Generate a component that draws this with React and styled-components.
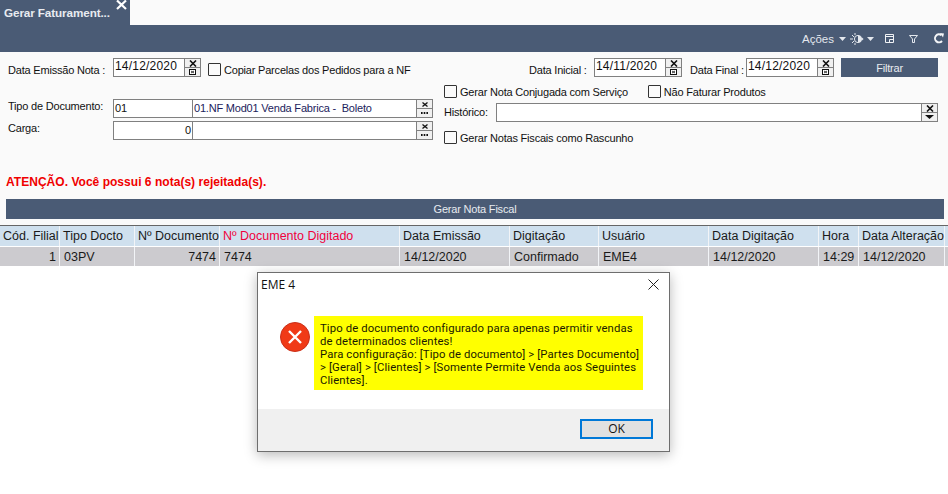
import React from 'react'
import styled, { createGlobalStyle } from 'styled-components'

const GlobalStyle = createGlobalStyle`
  html, body { margin: 0; padding: 0; background: #fff; }
  body { font-family: "Liberation Sans", Arial, sans-serif; font-size: 11px; color: #111; overflow: hidden; }
`

const Page = styled.div`
  position: relative;
  width: 948px;
  height: 494px;
  overflow: hidden;
  background: #fff;
`

const TabStrip = styled.div`
  height: 25px;
  background: #fafafa;
  display: flex;
`

const Tab = styled.div`
  width: 130px;
  background: #4a5b75;
  color: #e8ebf0;
  font-weight: 700;
  font-size: 11.7px;
  line-height: 26px;
  padding-left: 4px;
  box-sizing: border-box;
  display: flex;
  white-space: nowrap;
  letter-spacing: -0.1px;
`

const TabClose = styled.svg`
  width: 11px;
  height: 10px;
  flex: none;
  margin: 0 0 0 6px;
`

const Toolbar = styled.div`
  height: 27px;
  background: #4a5b75;
  color: #e4e8ee;
  display: flex;
  align-items: center;
  justify-content: flex-end;
  padding-right: 3px;
  box-sizing: border-box;
`

const ToolText = styled.span`
  font-size: 11.5px;
  margin-right: 5px;
`

const ToolIcon = styled.svg`
  display: block;
  flex: none;
  margin-left: ${p => p.$left || 0}px;
`

const Panel = styled.div`
  height: 173px;
  background: #fafafa;
  display: flex;
  flex-direction: column;
`

const Form = styled.div`
  height: 122px;
  padding: 6px 10px 0 8px;
  box-sizing: border-box;
`

const TopRow = styled.div`
  display: flex;
  align-items: flex-start;
  height: 27px;
`

const Label = styled.span`
  font-size: 11px;
  letter-spacing: -0.2px;
  color: #111;
  white-space: nowrap;
  width: ${p => (p.$width ? `${p.$width}px` : 'auto')};
  margin-left: ${p => p.$left || 0}px;
  padding-top: ${p => p.$top || 0}px;
  flex: none;
`

const DateField = styled.div`
  width: 88px;
  height: 19px;
  flex: none;
  display: flex;
  border: 1px solid #808080;
  box-sizing: border-box;
  background: #fff;
`

const DateValue = styled.div`
  flex: 1;
  font-size: 12px;
  line-height: 15px;
  padding-left: 1px;
  letter-spacing: 0.2px;
`

const SideButtons = styled.div`
  width: 16px;
  flex: none;
  display: flex;
  flex-direction: column;
  border-left: 1px solid #808080;
  box-sizing: border-box;
`

const SideButton = styled.div`
  flex: 1;
  display: flex;
  align-items: center;
  justify-content: center;
  background: #f0f0f0;
  & + & { border-top: 1px solid #808080; }
`

const Box = styled.span`
  width: 13px;
  height: 13px;
  flex: none;
  border: 1px solid #333;
  border-radius: 1px;
  box-sizing: border-box;
  background: #fafafa;
  display: inline-block;
`

const CheckLabel = styled.label`
  display: inline-flex;
  align-items: center;
  gap: 3px;
  font-size: 11px;
  letter-spacing: -0.2px;
  height: 13px;
  white-space: nowrap;
  margin-left: ${p => p.$left || 0}px;
  margin-top: ${p => p.$top || 0}px;
`

const Spacer = styled.div`
  flex: 1;
`

const DarkButton = styled.div`
  background: #4a5b75;
  color: #e8ebf0;
  font-size: 11px;
  letter-spacing: -0.2px;
  text-align: center;
`

const FilterButton = styled(DarkButton)`
  width: 97px;
  height: 19px;
  line-height: 20px;
  margin-left: 7px;
  flex: none;
`

const GenerateButton = styled(DarkButton)`
  height: 20px;
  line-height: 20px;
  margin: 9px 4px 0 6px;
`

const Columns = styled.div`
  display: grid;
  grid-template-columns: 425px 1fr;
  column-gap: 11px;
`

const LeftColumn = styled.div`
  padding-top: 14px;
  display: flex;
  flex-direction: column;
  gap: 3px;
`

const LookupRow = styled.div`
  display: flex;
  align-items: flex-start;
`

const Lookup = styled.div`
  width: 320px;
  height: 19px;
  display: flex;
  border: 1px solid #808080;
  box-sizing: border-box;
  background: #fff;
`

const LookupCell = styled.div`
  width: ${p => (p.$width ? `${p.$width}px` : 'auto')};
  flex: ${p => (p.$width ? 'none' : 1)};
  font-size: 11px;
  letter-spacing: -0.2px;
  line-height: 17px;
  padding: 0 1px;
  white-space: pre;
  box-sizing: border-box;
  color: ${p => p.$color || '#111'};
  text-align: ${p => p.$align || 'left'};
  border-right: ${p => (p.$divide ? '1px solid #808080' : 'none')};
`

const RightColumn = styled.div`
  display: flex;
  flex-direction: column;
  align-items: flex-start;
`

const CheckRow = styled.div`
  display: flex;
`

const HistoryRow = styled.div`
  display: flex;
  align-items: flex-start;
  margin-top: 5px;
  width: 100%;
`

const HistoryField = styled(Lookup)`
  flex: 1;
  width: auto;
`

const Warning = styled.div`
  color: #f00000;
  font-weight: 700;
  font-size: 12px;
  letter-spacing: 0.03px;
  padding-left: 6px;
  line-height: 16px;
`

const Table = styled.div`
  border-top: 1px solid #666;
`

const GridRow = styled.div`
  display: grid;
  grid-template-columns: 60px 75px 85px 180px 110px 89px 110px 110px 40px 86px 1fr;
  height: 20px;
  box-sizing: border-box;
  background: ${p => (p.$head ? '#cfe0ee' : '#cccbcf')};
  & + & { border-top: 1px solid #fff; }
`

const Cell = styled.div`
  font-size: 12.5px;
  line-height: 20px;
  padding: 0 3px 0 ${p => (p.$data ? 4 : 3)}px;
  white-space: nowrap;
  overflow: hidden;
  color: ${p => p.$color || '#1a1a1a'};
  text-align: ${p => p.$align || 'left'};
  border-right: 1px solid #f2f4f7;
`

const Dialog = styled.div`
  position: absolute;
  left: 257px;
  top: 272px;
  width: 413px;
  height: 180px;
  background: #fff;
  border: 1px solid #6e6e6e;
  box-sizing: border-box;
  box-shadow: 0 3px 12px rgba(0, 0, 0, 0.28);
  display: flex;
  flex-direction: column;
`

const DialogTitle = styled.div`
  height: 23px;
  padding: 0 10px 0 3px;
  display: flex;
  align-items: center;
  justify-content: space-between;
  font-family: "Open Sans", "Noto Sans", sans-serif;
  font-size: 12px;
  color: #111;
`

const DialogBody = styled.div`
  flex: 1;
  display: flex;
  align-items: flex-start;
  padding: 20px 0 0 22px;
`

const ErrorIcon = styled.svg`
  flex: none;
  margin-top: 6px;
`

const Message = styled.div`
  width: 329px;
  height: 74px;
  margin-left: 4px;
  background: #ffff00;
  padding: 6px 6px 0 6px;
  box-sizing: border-box;
  font-family: Roboto, "Noto Sans", sans-serif;
  font-size: 11.3px;
  letter-spacing: 0.12px;
  line-height: 13px;
  color: #1a1a00;
  white-space: nowrap;
`

const DialogFooter = styled.div`
  height: 42px;
  background: #f0f0f0;
  display: flex;
  justify-content: flex-end;
  align-items: flex-start;
  padding: 10px 16px 0 0;
  box-sizing: border-box;
`

const OkButton = styled.div`
  width: 73px;
  height: 20px;
  border: 2px solid #0078d7;
  background: #e1e1e1;
  box-sizing: border-box;
  text-align: center;
  font-family: "Open Sans", "Noto Sans", sans-serif;
  font-size: 12px;
  line-height: 16px;
  color: #111;
`

const CloseGlyph = () => (
  <svg width="8" height="7" viewBox="0 0 8 7"><path d="M1 .5l6 6M7 .5l-6 6" stroke="#111" strokeWidth="1.6" fill="none" /></svg>
)

const TinyClose = () => (
  <svg width="6" height="5" viewBox="0 0 6 5"><path d="M.5 .5l5 4M5.5 .5l-5 4" stroke="#111" strokeWidth="1.3" fill="none" /></svg>
)

const CalendarGlyph = () => (
  <svg width="7" height="6" viewBox="0 0 7 6">
    <rect x=".5" y=".5" width="6" height="5" fill="#fff" stroke="#111" />
    <path d="M2 2l3 2M5 2l-3 2" stroke="#111" strokeWidth=".8" />
  </svg>
)

const DotsGlyph = () => (
  <svg width="7" height="2" viewBox="0 0 7 2"><path d="M0 0h1.6v2H0zM2.7 0h1.6v2H2.7zM5.4 0H7v2H5.4z" fill="#111" /></svg>
)

const ArrowGlyph = () => (
  <svg width="9" height="4" viewBox="0 0 9 4"><path d="M0 0h9L4.5 4z" fill="#111" /></svg>
)

const Caret = ({ left }) => (
  <ToolIcon $left={left} width="7" height="4" viewBox="0 0 7 4"><path d="M0 0h7L3.5 4z" fill="#e4e8ee" /></ToolIcon>
)

const DateInput = ({ value }) => (
  <DateField>
    <DateValue>{value}</DateValue>
    <SideButtons>
      <SideButton><CloseGlyph /></SideButton>
      <SideButton><CalendarGlyph /></SideButton>
    </SideButtons>
  </DateField>
)

const LookupButtons = () => (
  <SideButtons>
    <SideButton><TinyClose /></SideButton>
    <SideButton><DotsGlyph /></SideButton>
  </SideButtons>
)

const columns = [
  { head: 'Cód. Filial', value: '1', align: 'right' },
  { head: 'Tipo Docto', value: '03PV' },
  { head: 'Nº Documento', value: '7474', align: 'right' },
  { head: 'Nº Documento Digitado', value: '7474', color: '#f0003c' },
  { head: 'Data Emissão', value: '14/12/2020' },
  { head: 'Digitação', value: 'Confirmado' },
  { head: 'Usuário', value: 'EME4' },
  { head: 'Data Digitação', value: '14/12/2020' },
  { head: 'Hora', value: '14:29' },
  { head: 'Data Alteração', value: '14/12/2020' },
  { head: '', value: '' },
]

export default function App() {
  return (
    <Page>
      <GlobalStyle />
      <TabStrip>
        <Tab>
          Gerar Faturament...
          <TabClose viewBox="0 0 11 10"><path d="M1 .5l9 8.5M10 .5L1 9" stroke="#fff" strokeWidth="2.2" fill="none" /></TabClose>
        </Tab>
      </TabStrip>
      <Toolbar>
        <ToolText>Ações</ToolText>
        <Caret left={0} />
        <ToolIcon $left={4} width="14" height="12" viewBox="0 0 14 12">
          <path d="M0 6h3M2 2l2 2M2 10l2-2M5 0v2M5 10v2" stroke="#e4e8ee" fill="none" />
          <circle cx="8" cy="6" r="3.6" fill="none" stroke="#e4e8ee" />
          <path d="M8 2.4a3.6 3.6 0 0 1 0 7.2z" fill="#e4e8ee" />
          <path d="M12 4.5L13.6 6 12 7.5z" fill="#e4e8ee" />
        </ToolIcon>
        <Caret left={3} />
        <ToolIcon $left={11} width="9" height="9" viewBox="0 0 9 9">
          <path d="M.5 .5h8v8h-8zM.5 2.5h8M4.5 8.5v-3h4" fill="none" stroke="#f0f2f5" />
        </ToolIcon>
        <ToolIcon $left={15} width="9" height="8" viewBox="0 0 9 8">
          <path d="M.5 .5h8L5.5 4v3.5h-2V4z" fill="none" stroke="#e4e8ee" />
        </ToolIcon>
        <ToolIcon $left={15} width="12" height="11" viewBox="0 0 12 11">
          <path d="M8.5 2.2A4 4 0 1 0 9 8" fill="none" stroke="#f4f5f7" strokeWidth="2" />
          <path d="M7 0l4 .5-1 4z" fill="#f4f5f7" />
        </ToolIcon>
      </Toolbar>
      <Panel>
        <Form>
          <TopRow>
            <Label $width={105} $top={6}>Data Emissão Nota :</Label>
            <DateInput value="14/12/2020" />
            <CheckLabel $left={7} $top={5}><Box />Copiar Parcelas dos Pedidos para a NF</CheckLabel>
            <Spacer />
            <Label $top={6} $width={65}>Data Inicial :</Label>
            <DateInput value="14/11/2020" />
            <Label $left={8} $width={56} $top={6}>Data Final :</Label>
            <DateInput value="14/12/2020" />
            <FilterButton>Filtrar</FilterButton>
          </TopRow>
          <Columns>
            <LeftColumn>
              <LookupRow>
                <Label $width={105} $top={1}>Tipo de Documento:</Label>
                <Lookup>
                  <LookupCell $width={79} $divide>01</LookupCell>
                  <LookupCell $color="#1c1c5c">01.NF Mod01 Venda Fabrica -  Boleto</LookupCell>
                  <LookupButtons />
                </Lookup>
              </LookupRow>
              <LookupRow>
                <Label $width={105} $top={1}>Carga:</Label>
                <Lookup>
                  <LookupCell $width={79} $divide $align="right">0</LookupCell>
                  <LookupCell />
                  <LookupButtons />
                </Lookup>
              </LookupRow>
            </LeftColumn>
            <RightColumn>
              <CheckRow>
                <CheckLabel><Box />Gerar Nota Conjugada com Serviço</CheckLabel>
                <CheckLabel $left={20}><Box />Não Faturar Produtos</CheckLabel>
              </CheckRow>
              <HistoryRow>
                <Label $top={3} $width={52}>Histórico:</Label>
                <HistoryField>
                  <Spacer />
                  <SideButtons>
                    <SideButton><CloseGlyph /></SideButton>
                    <SideButton><ArrowGlyph /></SideButton>
                  </SideButtons>
                </HistoryField>
              </HistoryRow>
              <CheckLabel $top={9}><Box />Gerar Notas Fiscais como Rascunho</CheckLabel>
            </RightColumn>
          </Columns>
        </Form>
        <Warning>ATENÇÃO. Você possui 6 nota(s) rejeitada(s).</Warning>
        <GenerateButton>Gerar Nota Fiscal</GenerateButton>
      </Panel>
      <Table>
        <GridRow $head>
          {columns.map((c, i) => (
            <Cell key={i} $color={c.color}>{c.head}</Cell>
          ))}
        </GridRow>
        <GridRow>
          {columns.map((c, i) => (
            <Cell key={i} $data $align={c.align}>{c.value}</Cell>
          ))}
        </GridRow>
      </Table>
      <Dialog>
        <DialogTitle>
          EME 4
          <svg width="11" height="11" viewBox="0 0 11 11"><path d="M.5 .5l10 10M10.5 .5l-10 10" stroke="#222" fill="none" /></svg>
        </DialogTitle>
        <DialogBody>
          <ErrorIcon width="30" height="30" viewBox="0 0 30 30">
            <circle cx="15" cy="15" r="14.5" fill="#f03a17" stroke="#c9301a" />
            <path d="M9 9l12 12M21 9L9 21" stroke="#fff" strokeWidth="2.4" fill="none" />
          </ErrorIcon>
          <Message>
            Tipo de documento configurado para apenas permitir vendas<br />
            de determinados clientes!<br />
            Para configuração: [Tipo de documento] &gt; [Partes Documento]<br />
            &gt; [Geral] &gt; [Clientes] &gt; [Somente Permite Venda aos Seguintes<br />
            Clientes].
          </Message>
        </DialogBody>
        <DialogFooter>
          <OkButton>OK</OkButton>
        </DialogFooter>
      </Dialog>
    </Page>
  )
}
